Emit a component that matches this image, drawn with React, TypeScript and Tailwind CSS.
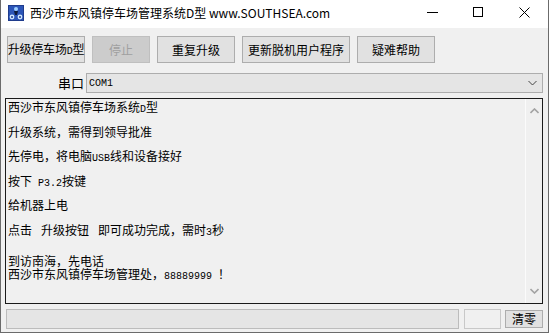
const cjk = { fontFamily: "'Noto Sans CJK SC', 'Noto Sans', sans-serif" };
const mono = { fontFamily: "'Liberation Mono', 'DejaVu Sans Mono', monospace" };

function Asc({ children }: { children: string }) {
  return (
    <span style={mono} className="text-[10px] whitespace-pre">
      {children}
    </span>
  );
}

function Gap() {
  return <span className="inline-block w-[9px]" />;
}

function Btn({ w, children, disabled = false }: { w: string; children: React.ReactNode; disabled?: boolean }) {
  return (
    <div
      className={`${w} h-[27px] flex items-center justify-center border text-[12px] whitespace-nowrap ${
        disabled ? "bg-[#cccccc] border-[#bfbfbf] text-[#a0a0a0]" : "bg-[#e1e1e1] border-[#adadad] text-black"
      }`}
    >
      {children}
    </div>
  );
}

function AppIcon() {
  return (
    <svg width="16" height="16" viewBox="0 0 16 16">
      <rect x="0" y="0" width="16" height="16" fill="#1f3c8c" />
      <rect x="1" y="1" width="14" height="14" fill="#2b55b8" />
      <circle cx="8" cy="4" r="2" fill="#9fd0ff" />
      <path d="M6 6 L10 6 L9 10 L7 10 Z" fill="#0d1a3a" />
      <circle cx="4" cy="12" r="2.4" fill="#cfe6ff" />
      <circle cx="12" cy="12" r="2.4" fill="#cfe6ff" />
      <circle cx="4" cy="12" r="1" fill="#1f3c8c" />
      <circle cx="12" cy="12" r="1" fill="#1f3c8c" />
    </svg>
  );
}

export default function App() {
  return (
    <div style={cjk} className="w-[550px] h-[335px] bg-white overflow-hidden">
      <div className="w-[549px] h-[333px] flex flex-col border-l border-r border-b border-[#6b6b6b]">
        {/* title bar */}
        <div className="h-[28px] bg-white flex items-center shrink-0">
          <div className="ml-[7px] mt-[-2px]">
            <AppIcon />
          </div>
          <span className="ml-[6px] mt-[-3px] text-[12px] text-black">
            西沙市东风镇停车场管理系统D型 www.SOUTHSEA.com
          </span>
          <div className="ml-auto flex items-center h-full mt-[-4px]">
            <div className="w-[46px] flex justify-center">
              <div className="w-[11px] h-px bg-black" />
            </div>
            <div className="w-[46px] flex justify-center">
              <div className="w-[10px] h-[10px] border border-black" />
            </div>
            <div className="w-[46px] flex justify-center mr-[1px]">
              <svg width="11" height="11" viewBox="0 0 11 11">
                <path d="M0.5 0.5 L10.5 10.5 M10.5 0.5 L0.5 10.5" stroke="#000" strokeWidth="1" />
              </svg>
            </div>
          </div>
        </div>

        {/* body */}
        <div className="flex-1 bg-[#f0f0f0] flex flex-col">
          <div className="mt-[8px] ml-[6px] flex gap-[7px]">
            <Btn w="w-[78px]">
              <span className="tracking-[-0.2px]">
                升级停车场<Asc>D</Asc>型
              </span>
            </Btn>
            <Btn w="w-[58px]" disabled>
              停止
            </Btn>
            <Btn w="w-[78px]">重复升级</Btn>
            <Btn w="w-[108px]">更新脱机用户程序</Btn>
            <Btn w="w-[78px]">疑难帮助</Btn>
          </div>

          <div className="mt-[10px] flex items-center h-[20px]">
            <div className="w-[84px] text-right text-[13px] pr-[1px] leading-[20px]">串口</div>
            <div className="ml-[1px] w-[457px] h-[20px] bg-[#e5e5e5] border border-[#adadad] flex items-center">
              <span style={mono} className="ml-[2px] text-[10px] text-black">
                COM1
              </span>
              <svg className="ml-auto mr-[5px]" width="9" height="6" viewBox="0 0 9 6">
                <path d="M0.5 1 L4.5 5 L8.5 1" stroke="#444" strokeWidth="1" fill="none" />
              </svg>
            </div>
          </div>

          <div className="mt-[5px] ml-[4px] w-[538px] h-[206px] border border-[#1a1a1a] flex">
            <div className="flex-1 pl-[2px] pt-[1px] text-[12px] text-black">
              <div className="h-[24.5px] leading-[13px]">
                西沙市东风镇停车场系统<Asc>D</Asc>型
              </div>
              <div className="h-[24.5px] leading-[13px]">升级系统，需得到领导批准</div>
              <div className="h-[24.5px] leading-[13px]">
                先停电，将电脑<Asc>USB</Asc>线和设备接好
              </div>
              <div className="h-[24.5px] leading-[13px]">
                按下<Asc> P3.2</Asc>按键
              </div>
              <div className="h-[24.5px] leading-[13px]">给机器上电</div>
              <div className="h-[24.5px] leading-[13px]">
                点击<Gap />升级按钮<Gap />即可成功完成，需时<Asc>3</Asc>秒
              </div>
              <div className="h-[8px]" />
              <div className="h-[13px] leading-[12px]">到访南海，先电话</div>
              <div className="h-[12px] leading-[12px]">
                西沙市东风镇停车场管理处，<Asc>88889999 </Asc>！
              </div>
            </div>
            <div className="w-[17px] border-l border-[#fbfbfb] flex flex-col items-center justify-between py-[9px]">
              <svg width="9" height="6" viewBox="0 0 9 6">
                <path d="M0.5 5 L4.5 1 L8.5 5" stroke="#a3a3a3" strokeWidth="1.6" fill="none" />
              </svg>
              <svg width="9" height="6" viewBox="0 0 9 6">
                <path d="M0.5 1 L4.5 5 L8.5 1" stroke="#a3a3a3" strokeWidth="1.6" fill="none" />
              </svg>
            </div>
          </div>

          <div className="mt-[5px] ml-[5px] flex items-center gap-[5px]">
            <div className="w-[453px] h-[20px] bg-[#e5e5e5] border border-[#bcbcbc]" />
            <div className="w-[37px] h-[20px] bg-[#f0f0f0] border border-[#c8c8c8]" />
            <div className="w-[38px] h-[18px] bg-[#e1e1e1] border border-[#adadad] flex items-center justify-center text-[12px] -ml-[1px]">
              清零
            </div>
          </div>
        </div>
      </div>
    </div>
  );
}
